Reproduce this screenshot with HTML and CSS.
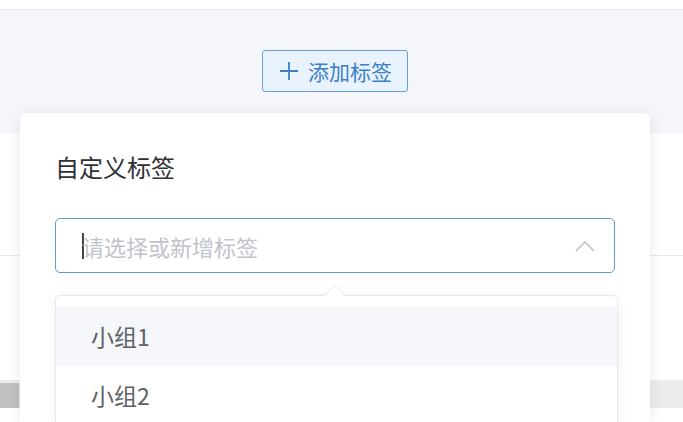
FILE: index.html
```html
<!DOCTYPE html>
<html lang="zh-CN">
<head>
  <meta charset="UTF-8" />
  <meta name="viewport" content="width=device-width, initial-scale=1.0"/>
  <title>添加标签</title>
  <link rel="stylesheet" href="styles.css">
</head>
<body>
  <div class="topbar"></div>

  <div class="header">
    <button class="btn-add">
      <svg class="icon-plus" viewBox="0 0 20 20" width="20" height="20">
        <path d="M10 1 V19 M1 10 H19" stroke="currentColor" stroke-width="1.8" fill="none" />
      </svg>
      <span>添加标签</span>
    </button>
  </div>

  <div class="content">
    <div class="row"></div>
    <div class="spacer"></div>
    <div class="scrollbar"><div class="thumb"></div></div>
  </div>

  <div class="popover">
    <h3 class="popover-title">自定义标签</h3>
    <div class="select">
      <span class="caret"></span>
      <span class="placeholder">请选择或新增标签</span>
      <svg class="chevron" viewBox="0 0 20 12" width="20" height="12">
        <polyline points="1,11 10,2 19,11" stroke="#c0c4cc" stroke-width="1.6" fill="none" />
      </svg>
    </div>
    <div class="dropdown">
      <ul class="options">
        <li class="option hover">小组1</li>
        <li class="option">小组2</li>
      </ul>
    </div>
  </div>
</body>
</html>
```

FILE: styles.css
```css
body {
  margin: 0;
  font-family: "Noto Sans CJK SC", "Noto Sans", sans-serif;
  background-color: #ffffff;
  color: #303133;
  overflow: hidden;
}

.topbar {
  height: 9px;
  background-color: #ffffff;
  border-bottom: 1px solid #e6e8ec;
}

.header {
  height: 123px;
  box-sizing: border-box;
  padding: 40px 13px 0 0;
  background-color: #f4f6fa;
  text-align: center;
}

.btn-add {
  display: inline-flex;
  align-items: center;
  gap: 9px;
  height: 42px;
  padding: 0 15px 0 16px;
  background-color: #e8f3ff;
  border: 1px solid #6a9fd3;
  border-radius: 3px;
  color: #3d7fc6;
  font-family: inherit;
  font-size: 21px;
  cursor: pointer;
}

.icon-plus {
  display: block;
}

.content {
  display: flex;
  flex-direction: column;
}

.row {
  height: 122px;
  border-bottom: 1px solid #e8e9ec;
}

.spacer {
  height: 124px;
}

.scrollbar {
  height: 28px;
  background-color: #ececed;
}

.thumb {
  width: 19px;
  height: 25px;
  margin-top: 3px;
  background-color: #c1c1c1;
}

.popover {
  position: absolute;
  left: 20px;
  top: 113px;
  width: 630px;
  bottom: 0;
  box-sizing: border-box;
  padding: 37px 35px 0;
  background-color: #ffffff;
  border-radius: 6px 6px 0 0;
  box-shadow: 0 2px 14px rgba(0, 0, 0, 0.09);
}

.popover-title {
  margin: 0;
  font-size: 24px;
  font-weight: normal;
  line-height: 34px;
  color: #303133;
}

.select {
  display: flex;
  align-items: center;
  height: 55px;
  margin-top: 34px;
  padding: 0 19px 0 26px;
  box-sizing: border-box;
  border: 1px solid #5c9bc9;
  border-radius: 5px;
}

.caret {
  width: 2px;
  height: 26px;
  background-color: #444;
  margin-right: -2px;
}

.placeholder {
  flex: 1;
  font-size: 22px;
  color: #c0c4cc;
}

.chevron {
  display: block;
}

.dropdown {
  position: relative;
  width: 561px;
  margin-top: 22px;
  border: 1px solid #e4e7ed;
  border-radius: 5px;
  background-color: #ffffff;
  box-shadow: 0 2px 12px rgba(0, 0, 0, 0.06);
}

.dropdown::before,
.dropdown::after {
  content: "";
  position: absolute;
  left: 268px;
  border: 11px solid transparent;
  border-top-width: 0;
}

.dropdown::before {
  top: -11px;
  border-bottom-color: #e4e7ed;
}

.dropdown::after {
  top: -10px;
  border-bottom-color: #ffffff;
}

.options {
  list-style: none;
  margin: 0;
  padding: 11px 0 0;
}

.option {
  height: 59px;
  line-height: 59px;
  padding-left: 35px;
  font-size: 23px;
  color: #606266;
}

.option.hover {
  background-color: #f5f7fa;
}
```
